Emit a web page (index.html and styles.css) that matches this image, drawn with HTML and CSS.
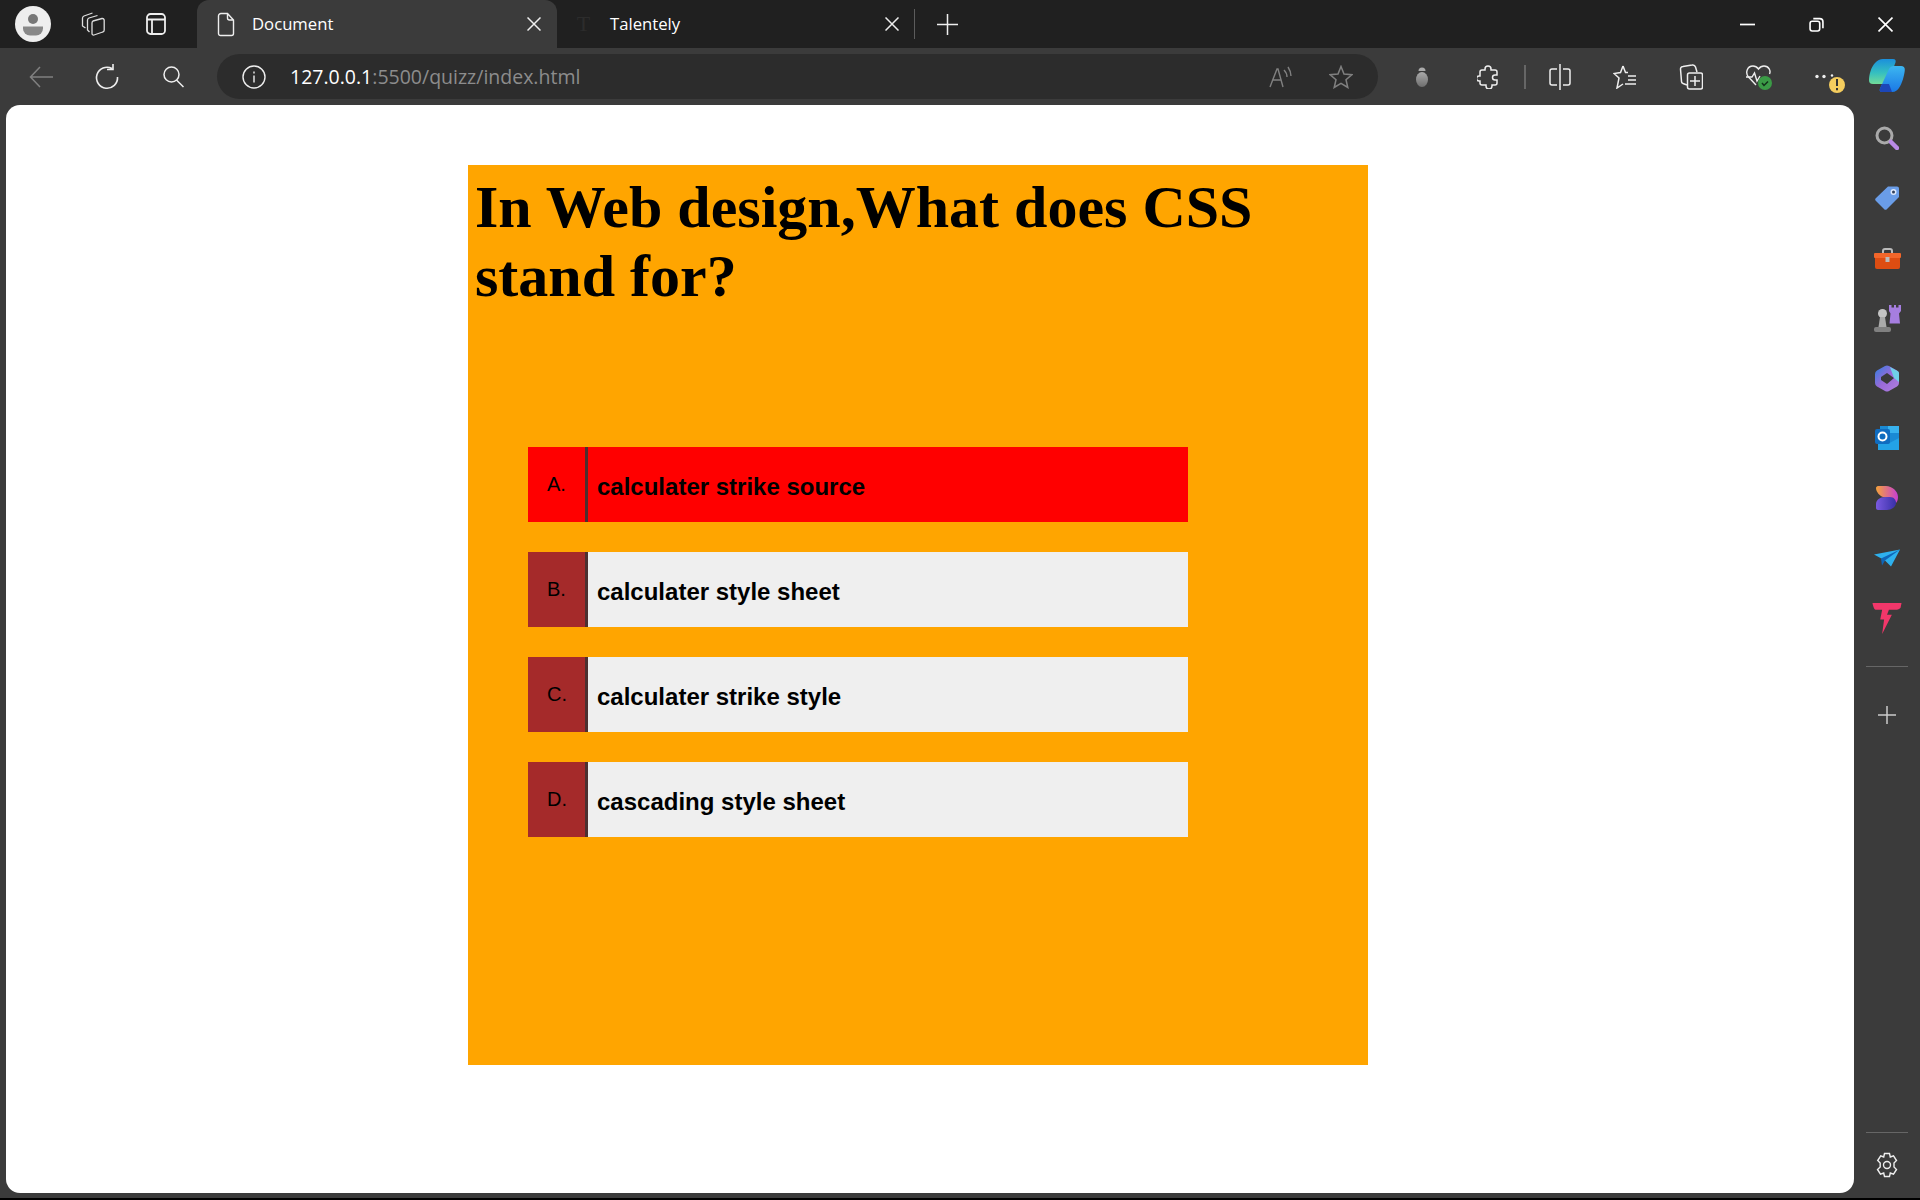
FILE: index.html
```html
<!DOCTYPE html>
<html lang="en">
<head>
    <meta charset="UTF-8">
    <title>Document</title>
    <link rel="stylesheet" href="styles.css">
</head>
<body>
    <div class="titlebar">
        <div class="profile">
            <svg width="36" height="36" viewBox="0 0 36 36"><ellipse cx="18" cy="18" rx="18" ry="18" fill="#eee"/><circle cx="18" cy="13" r="5" fill="#777"/><path d="M8 20.500h20v2a7 7 0 0 1-7 7h-6a7 7 0 0 1-7-7z" fill="#888"/></svg>
        </div>
        <div class="workspaces">
            <svg width="24" height="24" viewBox="0 0 24 24" fill="none" stroke="#ddd" stroke-width="1.300"><path d="M12 9l9-2.500a2 2 0 0 1 2.200 1.500v10a2 2 0 0 1-1.500 2L13 23a1.500 1.500 0 0 1-2-1.500V11a2.500 2.500 0 0 1 1-2z"/><path d="M8.500 20 6.500 18V8a2.500 2.500 0 0 1 1.500-2l8.500-2.500M4.500 16 1.500 14V6a2.500 2.500 0 0 1 1.500-2l8.500-3"/></svg>
        </div>
        <div class="sidebar-toggle">
            <svg width="20" height="22" viewBox="0 0 20 22" fill="none" stroke="#eee" stroke-width="1.800"><rect x="1" y="1" width="18" height="20" rx="3.500"/><path d="M1 6.500h18M6 6.500V21"/></svg>
        </div>
        <div class="tab active">
            <svg width="18" height="25" viewBox="0 0 18 25" fill="none" stroke="#eee" stroke-width="1.400"><path d="M4 1.500h6.500L16.500 8v13.500a2 2 0 0 1-2 2H3.500a2 2 0 0 1-2-2V4a2.500 2.500 0 0 1 2.500-2.500zM10.500 1.500V6a2 2 0 0 0 2 2h4"/></svg>
            <span class="tab-title">Document</span>
            <svg width="14" height="14" viewBox="0 0 14 14" stroke="#eee" stroke-width="1.500"><path d="M.5.5l13 13M13.500.5l-13 13"/></svg>
        </div>
        <div class="tab">
            <span class="favicon">T</span>
            <span class="tab-title">Talentely</span>
            <svg width="14" height="14" viewBox="0 0 14 14" stroke="#eee" stroke-width="1.500"><path d="M.5.5l13 13M13.500.5l-13 13"/></svg>
        </div>
        <div class="tab-sep"></div>
        <div class="new-tab">
            <svg width="21" height="21" viewBox="0 0 21 21" stroke="#eee" stroke-width="1.500"><path d="M10.500 0v21M0 10.500h21"/></svg>
        </div>
        <div class="window-controls">
            <svg width="15" height="15" viewBox="0 0 14 14" stroke="#fff" stroke-width="1.600"><path d="M0 7h14"/></svg>
            <svg width="15" height="15" viewBox="0 0 14 14" fill="none" stroke="#fff" stroke-width="1.500"><rect x="1" y="4" width="9" height="9" rx="2"/><path d="M4 1.500h6a3 3 0 0 1 3 3v6"/></svg>
            <svg width="15" height="15" viewBox="0 0 14 14" stroke="#fff" stroke-width="1.500"><path d="M.5.5l13 13M13.500.5l-13 13"/></svg>
        </div>
    </div>

    <div class="toolbar">
        <div class="nav">
            <svg width="26" height="26" viewBox="0 0 26 26" fill="none" stroke="#808080" stroke-width="1.500"><path d="M25 13H3M12 3 2.500 13l9.500 10"/></svg>
            <svg class="reload" width="26" height="26" viewBox="0 0 26 26" fill="none" stroke="#eee" stroke-width="1.600"><path d="M18 4.500A10.500 10.500 0 1 0 23.500 13M19 0v5.500h-6"/></svg>
            <svg class="search" width="22" height="22" viewBox="0 0 22 22" fill="none" stroke="#eee" stroke-width="1.500"><circle cx="8.500" cy="8.500" r="7.500"/><path d="M13.500 14l7 7"/></svg>
        </div>
        <div class="address">
            <svg width="24" height="24" viewBox="0 0 24 24" fill="none" stroke="#eee" stroke-width="1.400"><circle cx="12" cy="12" r="11"/><path d="M12 10.500v7M12 6.500v2"/></svg>
            <span class="url"><span class="host">127.0.0.1</span>:5500/quizz/index.html</span>
            <svg class="read-aloud" width="26" height="24" viewBox="0 0 26 24" fill="none" stroke="#808080" stroke-width="1.400"><path d="M1 22 8 4h1l5 18M4 15h8M15 5c2 2 3 4 3 7M19 2c2 3 3 6 3 9"/></svg>
            <svg width="24" height="24" viewBox="0 0 24 24" fill="none" stroke="#808080" stroke-width="1.500"><path d="M12 1.500l3 7.500 8 .7-6 5 1.800 7.800-6.800-4.200-6.800 4.200L7 14.700l-6-5L9 9z"/></svg>
        </div>
        <div class="tools">
            <svg class="bug" width="14" height="22" viewBox="0 0 14 22">
                <defs><linearGradient id="bugBody" x1="0" y1="0" x2="0" y2="1"><stop offset="0" stop-color="#aaa"/><stop offset="1" stop-color="#6e6e6e"/></linearGradient></defs>
                <path d="M3.500 5a3.500 3.500 0 0 1 7 0z" fill="#aaa"/><ellipse cx="7" cy="13.500" rx="6" ry="7.500" fill="url(#bugBody)"/>
            </svg>
            <svg class="puzzle" width="22" height="24" viewBox="0 0 22 24" fill="none" stroke="#eee" stroke-width="1.500"><path d="M8 4a3 3 0 0 1 6 0v1h4a2 2 0 0 1 2 2v3h-2a2.500 2.500 0 0 0 0 5h2v3a2 2 0 0 1-2 2h-3v1a3 3 0 0 1-6 0v-1H5a2 2 0 0 1-2-2v-2H2a2.500 2.500 0 0 1 0-5h1V7a2 2 0 0 1 2-2h3z"/></svg>
            <div class="tool-sep"></div>
            <svg class="split" width="22" height="26" viewBox="0 0 22 26" fill="none" stroke="#eee" stroke-width="1.500"><path d="M11 0v26"/><path d="M8 5H3a2 2 0 0 0-2 2v12a2 2 0 0 0 2 2h5M14 5h5a2 2 0 0 1 2 2v12a2 2 0 0 1-2 2h-5"/></svg>
            <svg width="24" height="24" viewBox="0 0 24 24" fill="none" stroke="#eee" stroke-width="1.500"><path d="M10 1l2.500 6.500H15M10 1 7.500 7.500 1 8.500l5 4.500-2 10 6-4M15 11h8M15 15h8M12 19h11"/></svg>
            <svg width="24" height="26" viewBox="0 0 24 26" fill="none" stroke="#eee" stroke-width="1.500"><path d="M8 21 4 19.500a2 2 0 0 1-1.500-2L1.500 5A2.500 2.500 0 0 1 4 2.500L13 1a3 3 0 0 1 3.500 2L18 8"/><rect x="8.500" y="9" width="15" height="16" rx="2"/><path d="M16 12v10M11 17h10"/></svg>
            <svg width="28" height="28" viewBox="0 0 28 28"><path d="M11 22 3.500 14C0 10 2 3 8 3c2.500 0 4 1 5.500 3 1.500-2 3.500-3 5.500-3 5 0 7 5 5.500 8" fill="none" stroke="#eee" stroke-width="1.400"/><path d="M1 14h6l2.500-4 2.500 8 3-5" fill="none" stroke="#eee" stroke-width="1.400"/><circle cx="20" cy="20" r="7" fill="#3b9b46"/><path d="M17 20l2 2.500 4-4" fill="none" stroke="#12301a" stroke-width="1.500"/></svg>
            <svg class="more" width="32" height="32" viewBox="0 0 32 32"><circle cx="2" cy="15.500" r="1.700" fill="#eee"/><circle cx="9" cy="15.500" r="1.700" fill="#eee"/><circle cx="17" cy="14.500" r="1.200" fill="#eee"/><circle cx="22" cy="24" r="8" fill="#f5cd5e"/><path d="M22 18v7M22 27v2.200" stroke="#333" stroke-width="2"/></svg>
            <svg class="copilot" width="36" height="33" viewBox="0 0 36 33">
                <defs>
                    <linearGradient id="cpA" x1="0" y1="0" x2="0" y2="1"><stop offset="0" stop-color="#1b8fdc"/><stop offset=".55" stop-color="#35bfc0"/><stop offset="1" stop-color="#72dc98"/></linearGradient>
                    <linearGradient id="cpB" x1="0" y1="0" x2="0" y2="1"><stop offset="0" stop-color="#3cb6f0"/><stop offset="1" stop-color="#1a78e6"/></linearGradient>
                </defs>
                <path d="M14 0h10c2.500 0 3 1.500 2.500 3.500L19 23c-.5 1.500-1.500 2-3 2H4c-3 0-4-1.500-4-4 0-5 2-13 6-17 2.500-2.500 5-4 8-4z" fill="url(#cpA)"/>
                <path d="M25 7h7c2.500 0 4 1.500 3.800 4-.3 5-2.800 14-5.800 18-1.500 2-3.500 4-7 4H13c-2 0-3-1.500-2-3.500L20 10c1-2 3-3 5-3z" fill="url(#cpB)"/>
                <path d="M13 25h7l3 8H13c-2 0-3-1.500-2-3.500z" fill="#1c46b8"/>
            </svg>
        </div>
    </div>

    <div class="main">
        <div class="page">
            <div class="quiz">
                <h1 class="question">In Web design,What does CSS stand for?</h1>
                <ul class="options">
                    <li class="option wrong"><span class="letter">A.</span><span class="answer">calculater strike source</span></li>
                    <li class="option"><span class="letter">B.</span><span class="answer">calculater style sheet</span></li>
                    <li class="option"><span class="letter">C.</span><span class="answer">calculater strike style</span></li>
                    <li class="option"><span class="letter">D.</span><span class="answer">cascading style sheet</span></li>
                </ul>
            </div>
        </div>

        <div class="sidebar">
            <div class="side-icon">
                <svg width="24" height="24" viewBox="0 0 24 24" fill="none"><circle cx="9.500" cy="9.500" r="7.500" stroke="#aaa" stroke-width="3"/><path d="M16 16l6 6" stroke="#b98ae6" stroke-width="4.500" stroke-linecap="round"/></svg>
            </div>
            <div class="side-icon">
                <svg width="24" height="24" viewBox="0 0 24 24"><path d="M13 .5h9a2 2 0 0 1 2 2V11L12 23a2 2 0 0 1-3 0L1 15a2 2 0 0 1 0-3z" fill="#6a9de8"/><circle cx="18.500" cy="6" r="3" fill="#dfe9fb"/><circle cx="18.500" cy="6" r="1.500" fill="#33415c"/></svg>
            </div>
            <div class="side-icon">
                <svg width="27" height="21" viewBox="0 0 27 21"><path d="M9 6V3a2 2 0 0 1 2-2h5a2 2 0 0 1 2 2v3" fill="none" stroke="#bbb" stroke-width="2"/><rect y="5" width="27" height="5" rx="1" fill="#f2662a"/><path d="M1 10h25v9a2 2 0 0 1-2 2H3a2 2 0 0 1-2-2z" fill="#dd4d12"/><rect x="11.500" y="9" width="4" height="5" fill="#bbb"/></svg>
            </div>
            <div class="side-icon">
                <svg width="27" height="27" viewBox="0 0 27 27"><path d="M15 0h2.500v2.500H20V0h2v2.500h2.500V0H27v6l-2 2.500 1 10H15.500l1-10-1.500-2.500z" fill="#a67ee0"/><circle cx="8.500" cy="8.500" r="4.500" fill="#c4c4c4"/><path d="M6 12h5l1.500 10h-8z" fill="#aaa"/><rect y="22" width="17" height="5" rx="2" fill="#808080"/></svg>
            </div>
            <div class="side-icon">
                <svg width="24" height="27" viewBox="0 0 24 27">
                    <defs><linearGradient id="m365" x1="0" y1="0" x2="1" y2="1"><stop offset="0" stop-color="#2f7fe0"/><stop offset=".5" stop-color="#9a6ad8"/><stop offset="1" stop-color="#b080e0"/></linearGradient></defs>
                    <path d="M10 1a4 4 0 0 1 4 0l8 4.500a4 4 0 0 1 2 3.500v9a4 4 0 0 1-2 3.500L14 26a4 4 0 0 1-4 0l-8-4.500A4 4 0 0 1 0 18V9a4 4 0 0 1 2-3.500z" fill="url(#m365)"/>
                    <path d="M12 8l7 5-7 6-6-4v-3z" fill="#3a3a3a"/><path d="M15 2l7.500 4a3 3 0 0 1 1.500 3v8l-5-4z" fill="#6fd0e8"/>
                </svg>
            </div>
            <div class="side-icon">
                <svg width="24" height="24" viewBox="0 0 24 24"><path d="M5 0h18a1 1 0 0 1 1 1v22a1 1 0 0 1-1 1H5z" fill="#1a8ad4"/><path d="M13 0h11v7H13z" fill="#38b2ee"/><path d="M3 12l10.500 5.500L24 12v12H3z" fill="#23a2e6"/><rect y="3" width="15" height="15" rx="2" fill="#0f6cc0"/><circle cx="7.500" cy="10.500" r="4" fill="none" stroke="#fff" stroke-width="2"/></svg>
            </div>
            <div class="side-icon">
                <svg width="22" height="26" viewBox="0 0 22 26">
                    <defs>
                        <linearGradient id="loopA" x1="0" y1="0" x2="1" y2="0"><stop offset="0" stop-color="#f5a33a"/><stop offset="1" stop-color="#c63ed2"/></linearGradient>
                        <linearGradient id="loopB" x1="0" y1="0" x2="1" y2="0"><stop offset="0" stop-color="#7a5ae0"/><stop offset="1" stop-color="#3930a8"/></linearGradient>
                    </defs>
                    <path d="M2 1h8c6 0 12 5 12 11 0 3-1 5-2 6-2-5-8-6-13-6-3-1-7-5-7-9 0-1 1-2 2-2z" fill="url(#loopA)"/>
                    <path d="M9 12h5c4 0 6 3 6 6 0 4-5 7-9 7H2c-1 0-2-1-2-2v-4c0-4 4-7 9-7z" fill="url(#loopB)"/>
                </svg>
            </div>
            <div class="side-icon">
                <svg width="26" height="19" viewBox="0 0 26 18"><path d="M0 5l26-5-9 17-6-6z" fill="#2eb1ee"/><path d="M26 0 7 9l1 7 3-5z" fill="#0f66b8"/></svg>
            </div>
            <div class="side-icon">
                <svg width="30" height="31" viewBox="0 0 30 32"><path d="M0 0h30l-1 5c-1 1-2 2-4 2H17l-2 5h5L10 32l2-15H8l2-10H4C2 7 1 5 0 0z" fill="#f2376a"/></svg>
            </div>
            <div class="side-sep first"></div>
            <svg class="side-add" width="18" height="18" viewBox="0 0 18 18" stroke="#ccc" stroke-width="1.500"><path d="M9 0v18M0 9h18"/></svg>
            <div class="side-bottom">
                <div class="side-sep"></div>
                <svg width="24" height="26" viewBox="0 0 24 26" fill="none" stroke="#eee" stroke-width="1.400"><circle cx="12" cy="13" r="3.500"/><path d="M9.500 1.500h5l.8 3.500 3.200-1.200 3 4.700-2.500 2.500v4l2.500 2.500-3 4.700-3.200-1.200-.8 3.500h-5l-.8-3.500-3.200 1.200-3-4.700L5.200 15v-4L2.700 8.500l3-4.700L8.700 5z"/></svg>
            </div>
        </div>
    </div>
    <div class="taskbar-edge"></div>
</body>
</html>
```

FILE: styles.css
```css
* {
    box-sizing: border-box;
}

body {
    margin: 0;
    height: 1200px;
    display: flex;
    flex-direction: column;
    overflow: hidden;
    background-color: #3b3b3b;
    font-family: "Open Sans", sans-serif;
}

svg {
    display: block;
    flex-shrink: 0;
}

/* title bar */
.titlebar {
    height: 48px;
    display: flex;
    align-items: center;
    background-color: #202020;
    color: #fff;
    font-size: 16.7px;
}

.profile {
    margin-left: 15px;
    width: 36px;
}

.workspaces {
    margin-left: 30px;
}

.sidebar-toggle {
    margin-left: 41px;
}

.tab {
    width: 357px;
    height: 48px;
    padding: 0 15px 0 14px;
    display: flex;
    align-items: center;
    gap: 14px;
}

.tab.active {
    width: 360px;
    margin-left: 31px;
    padding: 0 16px 0 20px;
    gap: 17px;
    border-radius: 12px 12px 0 0;
    background-color: #3b3b3b;
}

.tab-title {
    flex: 1;
    padding-bottom: 2px;
}

.favicon {
    width: 25px;
    font-family: "Liberation Serif", serif;
    color: #2c2c2c;
    font-size: 22px;
    text-align: center;
}

.tab-sep {
    width: 1px;
    height: 30px;
    background-color: #5c5c5c;
}

.new-tab {
    margin-left: 22px;
}

.window-controls {
    margin-left: auto;
    margin-right: 27px;
    display: flex;
    align-items: center;
    gap: 54px;
}

/* toolbar */
.toolbar {
    height: 57px;
    display: flex;
    align-items: center;
}

.nav {
    width: 217px;
    padding-left: 28px;
    display: flex;
    align-items: center;
}

.reload {
    margin-left: 40px;
}

.search {
    margin-left: 43px;
}

.address {
    width: 1161px;
    height: 45px;
    padding: 0 25px;
    display: flex;
    align-items: center;
    border-radius: 23px;
    background-color: #2c2c2c;
    color: #8c8c8c;
    font-size: 19.5px;
}

.url {
    margin-left: 24px;
    flex: 1;
}

.host {
    color: #fff;
}

.read-aloud {
    margin-right: 34px;
}

.tools {
    flex: 1;
    padding-left: 37px;
    display: flex;
    align-items: center;
    gap: 42px;
}

.puzzle {
    margin-left: 6px;
}

.tool-sep {
    width: 2px;
    height: 24px;
    margin-left: -17px;
    background-color: #666;
}

.split {
    margin-left: -19px;
}

.copilot {
    margin-left: -20px;
    margin-top: -2px;
}

/* page */
.main {
    height: 1088px;
    display: flex;
}

.page {
    width: 1848px;
    margin-left: 6px;
    padding: 60px 0 0 462px;
    border-radius: 14px;
    background-color: #fff;
}

.quiz {
    width: 900px;
    height: 900px;
    padding-left: 7px;
    background-color: orange;
}

.question {
    margin: 0;
    padding-top: 8px;
    font-family: "Liberation Serif", serif;
    font-size: 60px;
    line-height: 69px;
    color: #000;
}

.options {
    list-style: none;
    margin: 136px 0 0 53px;
    padding: 0;
    width: 660px;
    font-family: "Liberation Sans", sans-serif;
}

.option {
    height: 75px;
    margin-bottom: 30px;
    display: flex;
    background-color: #efefef;
}

.option.wrong {
    background-color: red;
}

.letter {
    width: 60px;
    padding: 26px 0 0 19px;
    font-size: 20px;
    background-color: brown;
    border-right: 3px solid #4d3030;
}

.wrong .letter {
    background-color: red;
}

.answer {
    padding-left: 9px;
    line-height: 80px;
    font-size: 24px;
    font-weight: bold;
}

/* sidebar */
.sidebar {
    flex: 1;
    padding-top: 3px;
    display: flex;
    flex-direction: column;
    align-items: center;
}

.side-icon {
    height: 60px;
    flex-shrink: 0;
    display: flex;
    align-items: center;
}

.side-sep {
    width: 42px;
    height: 1px;
    flex-shrink: 0;
    background-color: #666;
}

.side-sep.first {
    margin-top: 18px;
}

.side-add {
    margin-top: 39px;
}

.side-bottom {
    margin-top: auto;
    margin-bottom: 15px;
    display: flex;
    flex-direction: column;
    align-items: center;
    gap: 19px;
}

.taskbar-edge {
    height: 7px;
    margin-top: auto;
    border-bottom: 2px solid #000;
}
```
